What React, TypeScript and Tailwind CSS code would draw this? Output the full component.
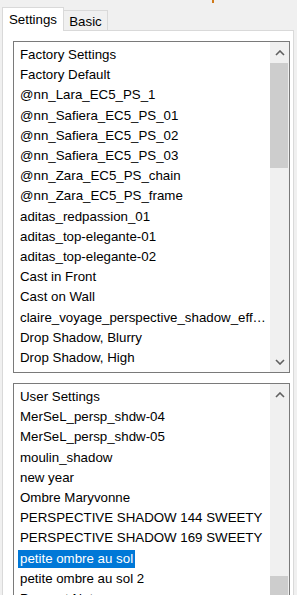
import React from 'react';

const factoryItems = [
  'Factory Settings',
  'Factory Default',
  '@nn_Lara_EC5_PS_1',
  '@nn_Safiera_EC5_PS_01',
  '@nn_Safiera_EC5_PS_02',
  '@nn_Safiera_EC5_PS_03',
  '@nn_Zara_EC5_PS_chain',
  '@nn_Zara_EC5_PS_frame',
  'aditas_redpassion_01',
  'aditas_top-elegante-01',
  'aditas_top-elegante-02',
  'Cast in Front',
  'Cast on Wall',
  'claire_voyage_perspective_shadow_effect',
  'Drop Shadow, Blurry',
  'Drop Shadow, High',
  'Drop Shadow, Low',
];

const userItems = [
  'User Settings',
  'MerSeL_persp_shdw-04',
  'MerSeL_persp_shdw-05',
  'moulin_shadow',
  'new year',
  'Ombre Maryvonne',
  'PERSPECTIVE SHADOW 144 SWEETY',
  'PERSPECTIVE SHADOW 169 SWEETY',
  'petite ombre au sol',
  'petite ombre au sol 2',
  'Peasant Note',
  'Reflect Behind',
];

function Chevron({ up }: { up: boolean }) {
  return (
    <svg width="10" height="6" viewBox="0 0 10 6" className="block">
      <polyline
        points={up ? '1,5 5,1 9,5' : '1,1 5,5 9,1'}
        fill="none"
        stroke="#606060"
        strokeWidth="1.6"
      />
    </svg>
  );
}

interface ListBoxProps {
  items: string[];
  selected?: number;
  height: string;
  thumbTop: string;
  thumbHeight: string;
  showDown: boolean;
}

function ListBox({ items, selected, height, thumbTop, thumbHeight, showDown }: ListBoxProps) {
  return (
    <div className={`flex border border-[#7a7a7a] bg-white ml-[10px] w-[277px] ${height}`}>
      {/* Rows */}
      <div className="flex-1 min-w-0 overflow-hidden pt-[3px]">
        {items.map((item, i) => (
          <div key={i} className="h-[20.2px] flex items-center pl-[4px] pr-[2px]">
            <span
              className={
                'truncate px-[2px] leading-[18px] ' +
                (i === selected ? 'bg-[#0078d7] text-white' : 'text-black')
              }
            >
              {item}
            </span>
          </div>
        ))}
      </div>

      {/* Scrollbar */}
      <div className="w-[19px] shrink-0 bg-[#f0f0f0] flex flex-col">
        <div className="h-[21px] flex items-center justify-center">
          <Chevron up />
        </div>
        <div className="flex-1 overflow-hidden">
          <div className={`mr-[1px] bg-[#cdcdcd] ${thumbTop} ${thumbHeight}`} />
        </div>
        {showDown && (
          <div className="h-[21px] flex items-center justify-center">
            <Chevron up={false} />
          </div>
        )}
      </div>
    </div>
  );
}

export default function App() {
  return (
    <div
      className="relative w-[297px] h-[595px] overflow-hidden bg-[#f0f0f0] text-[13.3px]"
      style={{ fontFamily: '"Liberation Sans", Arial, sans-serif' }}
    >
      <div className="absolute left-[212px] top-0 w-[2px] h-[3px] bg-[#d07a1a]" />

      {/* Tabs */}
      <div className="h-[30px] flex items-end pl-[2px]">
        <div className="relative z-10 -mb-px h-[24px] w-[62px] bg-white border border-b-0 border-[#d9d9d9] flex justify-center pt-[2px]">
          Settings
        </div>
        <div className="h-[20px] w-[44px] bg-[#f0f0f0] border border-l-0 border-b-0 border-[#d9d9d9] flex justify-center pt-[1px]">
          Basic
        </div>
      </div>

      {/* Panel */}
      <div className="ml-[2px] w-[292px] h-[600px] bg-white border-t border-l border-r border-[#d9d9d9] pt-[10px] flex flex-col gap-[10px]">
        <ListBox
          items={factoryItems}
          height="h-[332px]"
          thumbTop="mt-0"
          thumbHeight="h-[105px]"
          showDown
        />
        <ListBox
          items={userItems}
          selected={8}
          height="h-[300px]"
          thumbTop="mt-[171px]"
          thumbHeight="h-[100px]"
          showDown={false}
        />
      </div>
    </div>
  );
}
